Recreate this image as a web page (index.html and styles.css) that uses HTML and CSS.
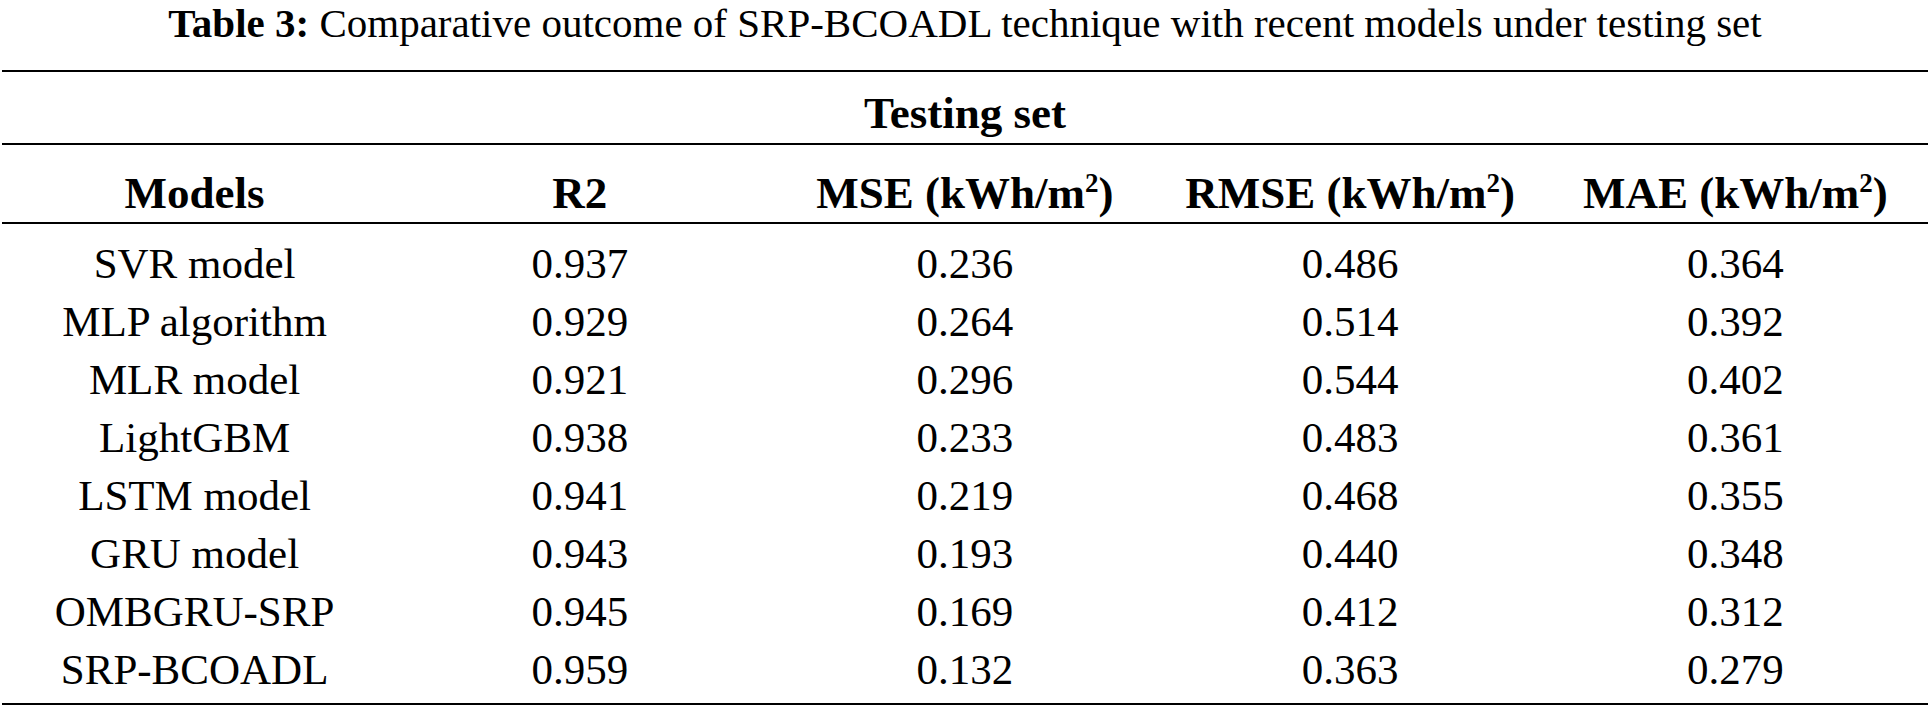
FILE: index.html
```html
<!DOCTYPE html>
<html lang="en">
<head>
<meta charset="utf-8">
<title>Table 3</title>
<link rel="stylesheet" href="styles.css">
</head>
<body>
<div class="caption"><b>Table 3:</b> Comparative outcome of SRP-BCOADL technique with recent models under testing set</div>
<table class="results">
  <thead>
    <tr class="group-row"><th colspan="5">Testing set</th></tr>
    <tr class="head-row">
      <th>Models</th>
      <th>R2</th>
      <th>MSE (kWh/m<sup>2</sup>)</th>
      <th>RMSE (kWh/m<sup>2</sup>)</th>
      <th>MAE (kWh/m<sup>2</sup>)</th>
    </tr>
  </thead>
  <tbody>
    <tr><td>SVR model</td><td>0.937</td><td>0.236</td><td>0.486</td><td>0.364</td></tr>
    <tr><td>MLP algorithm</td><td>0.929</td><td>0.264</td><td>0.514</td><td>0.392</td></tr>
    <tr><td>MLR model</td><td>0.921</td><td>0.296</td><td>0.544</td><td>0.402</td></tr>
    <tr><td>LightGBM</td><td>0.938</td><td>0.233</td><td>0.483</td><td>0.361</td></tr>
    <tr><td>LSTM model</td><td>0.941</td><td>0.219</td><td>0.468</td><td>0.355</td></tr>
    <tr><td>GRU model</td><td>0.943</td><td>0.193</td><td>0.440</td><td>0.348</td></tr>
    <tr><td>OMBGRU-SRP</td><td>0.945</td><td>0.169</td><td>0.412</td><td>0.312</td></tr>
    <tr><td>SRP-BCOADL</td><td>0.959</td><td>0.132</td><td>0.363</td><td>0.279</td></tr>
  </tbody>
</table>
</body>
</html>
```
FILE: styles.css
```css
html, body {
  margin: 0;
  padding: 0;
  background: #ffffff;
}
body {
  padding: 0 2px;
  color: #000000;
  font-family: "Liberation Serif", "Times New Roman", serif;
}
.caption {
  font-size: 41px;
  line-height: 46px;
  text-align: center;
  margin-bottom: 24px;
}
.caption b {
  font-weight: bold;
}
.results {
  width: 100%;
  border-collapse: collapse;
  table-layout: fixed;
  font-size: 43px;
  border-top: 2px solid #000;
  border-bottom: 2px solid #000;
}
.results th,
.results td {
  padding: 0;
  text-align: center;
  font-weight: normal;
  line-height: 42px;
  white-space: nowrap;
}
.results th {
  font-weight: bold;
  font-size: 45px;
}
.group-row th {
  padding: 20px 0 9px;
  border-bottom: 2px solid #000;
}
.head-row th {
  padding: 27px 0 8px;
  border-bottom: 2px solid #000;
}
.results sup {
  font-size: 0.6em;
  line-height: 0;
  vertical-align: 0.6em;
}
.results td {
  line-height: 58px;
}
.results tbody tr:first-child td {
  padding-top: 11px;
}
.results tbody tr:last-child td {
  padding-bottom: 4px;
}
```
